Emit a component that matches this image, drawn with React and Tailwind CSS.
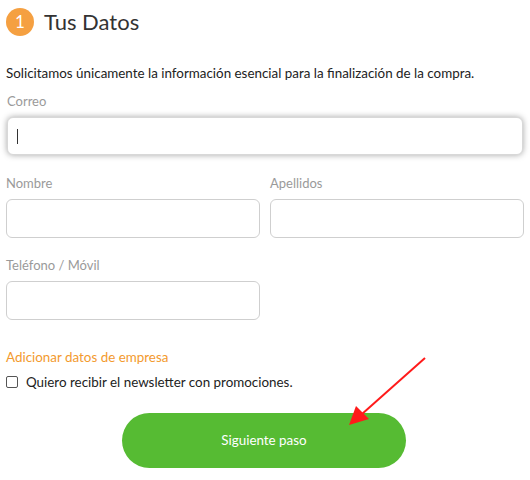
import React from "react";

const font = { fontFamily: "Lato, 'Liberation Sans', sans-serif" };

const Field = ({ label, className = "", focused = false }) => (
  <div className={className}>
    <label className="block text-[13px] leading-4 text-[#9a9a9a]">{label}</label>
    <div className="relative mt-[8px]">
      <input
        type="text"
        readOnly
        className={
          "block w-full rounded-[6px] bg-white outline-none " +
          (focused
            ? "h-[38px] border border-[#d8d8d8] shadow-[0_0_6px_rgba(0,0,0,0.35)]"
            : "h-[39px] border border-[#cfcfcf]")
        }
      />
      {focused && (
        <span className="absolute left-[10px] top-[12px] h-[15px] w-px bg-[#333]" />
      )}
    </div>
  </div>
);

const App = () => {
  return (
    <div className="relative w-[530px] h-[480px] bg-white text-[#333]" style={font}>
      <div className="px-[6px] pt-[8px]">
        <div className="flex items-center gap-[10px]">
          <div className="w-[28px] h-[28px] rounded-full bg-[#f5a041] flex items-center justify-center text-white text-[17px]">
            1
          </div>
          <h2 className="text-[22px] leading-7 text-[#333]">Tus Datos</h2>
        </div>

        <p className="mt-[29px] text-[13.4px] leading-4 text-[#222]">
          Solicitamos únicamente la información esencial para la finalización de la compra.
        </p>

        <Field label="Correo" focused className="mt-[12px] pl-px pr-px" />

        <div className="mt-[20px] grid grid-cols-2 gap-[10px]">
          <Field label="Nombre" />
          <Field label="Apellidos" />
        </div>

        <div className="mt-[19px] grid grid-cols-2 gap-[10px]">
          <Field label="Teléfono / Móvil" />
        </div>

        <a className="block mt-[29px] text-[13.4px] leading-4 text-[#f39a2e]">
          Adicionar datos de empresa
        </a>

        <label className="mt-[9px] flex items-center gap-[8px] text-[13.4px] leading-4 text-[#222]">
          <span className="w-[12px] h-[12px] rounded-[2px] border border-[#555] bg-white" />
          Quiero recibir el newsletter con promociones.
        </label>

        <div className="mt-[23px] flex justify-center pr-[2px]">
          <button className="w-[284px] h-[55px] rounded-full bg-[#56bb33] text-white text-[13.4px]">
            Siguiente paso
          </button>
        </div>
      </div>

      <svg
        className="absolute left-0 top-0 pointer-events-none"
        width="530"
        height="480"
        viewBox="0 0 530 480"
      >
        <line x1="425" y1="358" x2="362" y2="414" stroke="#ff1a1a" strokeWidth="2" />
        <polygon points="349,425 356,406 369,419" fill="#ff1a1a" />
      </svg>
    </div>
  );
};

export default App;
